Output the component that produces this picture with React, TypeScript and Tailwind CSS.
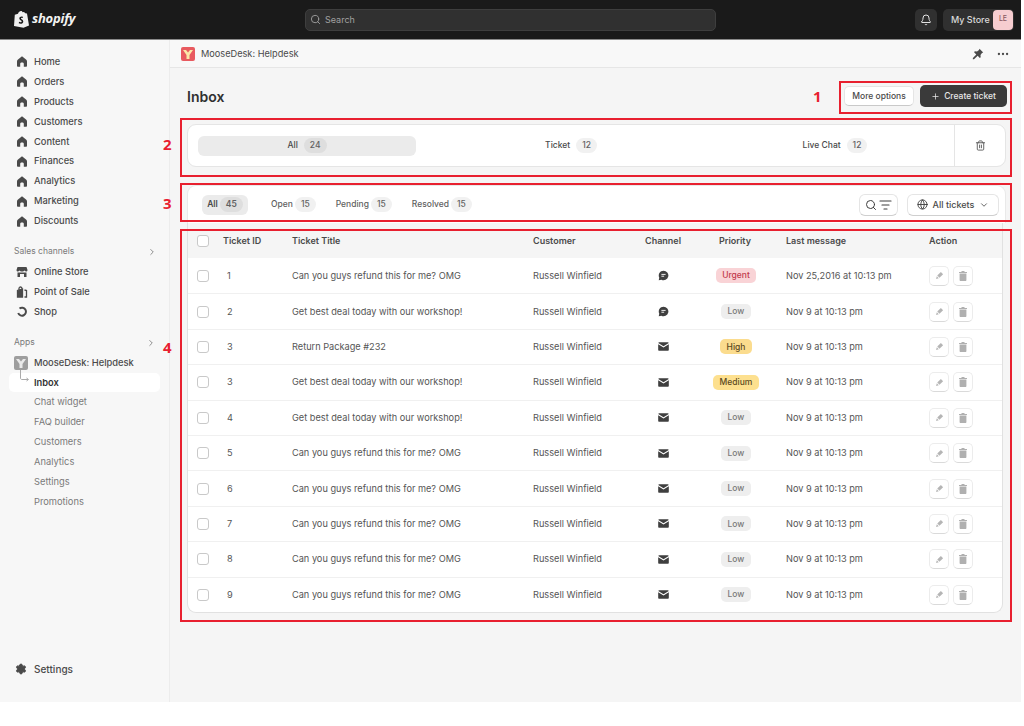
import React from "react";
import { Search, Bell, ChevronRight, ChevronDown, Plus, Trash2, Globe, MoreHorizontal, Settings as Gear } from "lucide-react";

const Home = () => (
  <svg width="10" height="11" viewBox="0 0 10 11" className="shrink-0 text-[#4a4a4a]" fill="currentColor">
    <path d="M5 .3 1 3.500C.4 4 0 4.600 0 5.400V10c0 .5.300.8.800.8h2.400V7.800c0-.8.800-1.300 1.800-1.300s1.800.5 1.800 1.300v3h2.400c.5 0 .8-.3.8-.8V5.400c0-.8-.4-1.400-1-1.900L5 .3z" />
  </svg>
);
const StoreIc = () => (
  <svg width="12" height="12" viewBox="0 0 12 12" className="shrink-0 text-[#4a4a4a]" fill="currentColor">
    <path d="M1.500 1h9l1 3c0 1-.7 1.500-1.500 1.500S8.600 5 8.500 4.300C8.300 5 7.700 5.500 7 5.500H5c-.7 0-1.300-.5-1.500-1.200C3.400 5 2.800 5.500 2 5.500S.5 5 .5 4l1-3z" />
    <path d="M1.500 6.500h9V11H8V8H4v3H1.500z" />
  </svg>
);
const PosIc = () => (
  <svg width="12" height="12" viewBox="0 0 12 12" className="shrink-0 text-[#4a4a4a]" fill="none" stroke="currentColor" strokeWidth="1.300">
    <path d="M1.500 11V4.500L6.500 3v8z" fill="currentColor" />
    <path d="M3 4V2.500C3 1.500 3.800 1 4.500 1S6 1.500 6 2.500V4M8.500 4l2 .5V11h-2" />
  </svg>
);
const ShopIc = () => (
  <svg width="12" height="12" viewBox="0 0 12 12" className="shrink-0 text-[#4a4a4a]" fill="none" stroke="currentColor" strokeWidth="2">
    <path d="M3.500 2.500A4 4 0 1 1 2.200 7" />
  </svg>
);
const Moose = ({ bg, fg }: { bg: string; fg: string }) => (
  <svg width="14" height="14" viewBox="0 0 14 14" className="shrink-0">
    <rect width="14" height="14" rx="2" fill={bg} />
    <path d="M2 3h3l2 2.500L9 3h3L8.500 8v4h-3V8z" fill={fg} />
  </svg>
);
const Chat = () => (
  <svg width="11" height="11" viewBox="0 0 12 12">
    <path d="M6 .8a5.200 5.200 0 0 0-4.600 7.600L.8 11.200l2.900-.6A5.200 5.200 0 1 0 6 .8z" fill="#3f3f3f" />
    <path d="M3.700 4.800h4.600M3.700 6.800h3" stroke="#fff" strokeWidth="1" />
  </svg>
);
const Mail = () => (
  <svg width="11" height="9" viewBox="0 0 12 10">
    <path d="M1.200.4h9.600c.5 0 .9.300 1 .7L6 4.700.2 1.100c.1-.4.500-.7 1-.7z" fill="#3f3f3f" />
    <path d="M.1 2.500 6 6.100l5.900-3.600v6c0 .6-.5 1.100-1.100 1.100H1.200C.6 9.600.1 9.100.1 8.500z" fill="#3f3f3f" />
  </svg>
);
const Pencil = () => (
  <svg width="9" height="9" viewBox="0 0 10 10" fill="#b5b5b5">
    <path d="M6.500 1 9 3.500 5 7.500 2.500 5z" />
    <path d="M2 5.800 4.200 8 1.200 8.800z" />
  </svg>
);
const Bin = () => (
  <svg width="8" height="10" viewBox="0 0 8 10" fill="#b0b0b0">
    <path d="M2.500 0h3v1H8v1H0V1h2.500zM.6 2.600h6.800V9c0 .6-.4 1-1 1H1.600c-.6 0-1-.4-1-1z" />
  </svg>
);
const Filter = () => (
  <svg width="13" height="10" viewBox="0 0 13 10" stroke="#3f3f3f" strokeWidth="1.200" strokeLinecap="round">
    <path d="M1 1h11M3 5h7M5 9h3" />
  </svg>
);

const Count = ({ n, dark }: { n: number; dark?: boolean }) => (
  <span className={`rounded-full px-[6px] h-[15px] flex items-center text-[8.500px] text-[#616161] ${dark ? "bg-[#dedede]" : "bg-[#f1f1f1]"}`}>{n}</span>
);

const nav = ["Home", "Orders", "Products", "Customers", "Content", "Finances", "Analytics", "Marketing", "Discounts"];
const sub = ["Chat widget", "FAQ builder", "Customers", "Analytics", "Settings", "Promotions"];
const long = "Can you guys refund this for me? OMG";
const best = "Get best deal today with our workshop!";
type P = "Urgent" | "Low" | "High" | "Medium";
const rows: { id: number; t: string; c: "chat" | "mail"; p: P; d: string }[] = [
  { id: 1, t: long, c: "chat", p: "Urgent", d: "Nov 25,2016 at 10:13 pm" },
  { id: 2, t: best, c: "chat", p: "Low", d: "Nov 9 at 10:13 pm" },
  { id: 3, t: "Return Package #232", c: "mail", p: "High", d: "Nov 9 at 10:13 pm" },
  { id: 3, t: best, c: "mail", p: "Medium", d: "Nov 9 at 10:13 pm" },
  { id: 4, t: best, c: "mail", p: "Low", d: "Nov 9 at 10:13 pm" },
  { id: 5, t: long, c: "mail", p: "Low", d: "Nov 9 at 10:13 pm" },
  { id: 6, t: long, c: "mail", p: "Low", d: "Nov 9 at 10:13 pm" },
  { id: 7, t: long, c: "mail", p: "Low", d: "Nov 9 at 10:13 pm" },
  { id: 8, t: long, c: "mail", p: "Low", d: "Nov 9 at 10:13 pm" },
  { id: 9, t: long, c: "mail", p: "Low", d: "Nov 9 at 10:13 pm" },
];
const badge: Record<P, string> = {
  Urgent: "bg-[#f9d3d6] text-[#c23a4b]",
  Low: "bg-[#eeeeee] text-[#7a7a7a]",
  High: "bg-[#fbdc8e] text-[#5c4a1e]",
  Medium: "bg-[#fde08f] text-[#5c4a1e]",
};
const cols = "grid grid-cols-[35px_69px_241px_112px_74px_67px_143px_1fr] items-center";
const Check = () => <span className="block w-3 h-3 rounded-[3px] border border-[#c9c9c9] bg-white ml-[9px]" />;

const RedBox = ({ cls }: { cls: string }) => <div className={`absolute border-2 border-[#e8202f] pointer-events-none ${cls}`} />;
const RedNum = ({ n, cls }: { n: number; cls: string }) => (
  <span className={`absolute text-[15px] font-bold leading-none text-[#e8202f] [font-family:'Open_Sans',sans-serif] ${cls}`}>{n}</span>
);

export default function App() {
  return (
    <div className="relative w-[1024px] h-[726px] bg-white overflow-hidden [font-family:Inter,sans-serif] text-[#4a4a4a]">
      <div className="w-[1021px] h-[702px] flex flex-col">
        <header className="h-[40px] shrink-0 bg-[#1a1a1a] border-b border-[#8a8a8a] flex items-center pl-[14px] pr-[7px]">
          <div className="w-[291px] flex items-center gap-[3px] pb-[1px]">
            <svg width="15" height="17" viewBox="0 0 15 17">
              <path d="M.8 3.800 4 2.800C4.500 1 5.800 0 7 0c.8 0 1.300.5 1.600 1.200l1.400-.3 1.300 1.300 1.700.2L15 14.500 9.500 16.800.0 15z" fill="#f0f0f0" />
              <path d="M8.900 5.900C7.500 5.200 5.300 5.800 5.300 7.600c0 1.800 2.400 1.800 2.400 2.900 0 1-1.500 1-2.600.3l-.4 1.500c1.800 1 4.600.5 4.600-1.900 0-2.100-2.400-2.100-2.400-3 0-.6 1-.8 2.100-.4z" fill="#1a1a1a" />
            </svg>
            <span className="text-[13px] font-bold italic text-[#f2f2f2] tracking-[-0.2px] [font-family:'Open_Sans',sans-serif]">shopify</span>
          </div>
          <div className="w-[411px] h-[22px] rounded-[5px] bg-[#303030] border border-[#3e3e3e] flex items-center gap-[4px] px-[4px] text-[9px] text-[#a0a0a0]">
            <Search size={11} className="text-[#a0a0a0]" />
            Search
          </div>
          <div className="ml-auto flex items-center gap-[6px]">
            <div className="w-[22px] h-[22px] rounded-[5px] bg-[#303030] flex items-center justify-center">
              <Bell size={12} className="text-[#e3e3e3]" />
            </div>
            <div className="h-[22px] w-[71px] rounded-[5px] bg-[#303030] flex items-center justify-between pl-2 pr-[1px] text-[9px] font-medium text-[#d9d9d9]">
              My Store
              <span className="w-5 h-5 rounded-[4px] bg-[#f6cdd0] text-[#8a5a60] text-[7px] flex items-center justify-center">LE</span>
            </div>
          </div>
        </header>

        <div className="flex-1 flex min-h-0">
          <aside className="w-[170px] shrink-0 bg-[#f7f7f7] border-r border-[#ececec] flex flex-col pt-[12px] pb-[23px] text-[9.300px] font-medium">
            <nav className="flex flex-col">
              {nav.map((n) => (
                <div key={n} className="h-[19.900px] flex items-center gap-[7px] pl-[17px]">
                  <Home />
                  <span>{n}</span>
                </div>
              ))}
            </nav>
            <div className="mt-[10px] h-[21px] flex items-center justify-between pl-[14px] pr-[12px] text-[8.500px] font-normal text-[#7a7a7a]">
              Sales channels <ChevronRight size={10} />
            </div>
            {[["Online Store", <StoreIc />], ["Point of Sale", <PosIc />], ["Shop", <ShopIc />]].map(([t, ic]) => (
              <div key={t as string} className="h-[19.900px] flex items-center gap-[6px] pl-[16px]">
                {ic}
                <span>{t}</span>
              </div>
            ))}
            <div className="mt-[11px] h-[20px] flex items-center justify-between pl-[14px] pr-[13px] text-[8.500px] font-normal text-[#7a7a7a]">
              Apps <ChevronRight size={10} />
            </div>
            <div className="h-[19.900px] flex items-center gap-[6px] pl-[14px] text-[#4a4a4a]">
              <Moose bg="#9e9e9e" fg="#e9e9e9" />
              <span>MooseDesk: Helpdesk</span>
            </div>
            <div className="relative mx-[9px] h-[19.900px] rounded-[5px] bg-white flex items-center pl-[25px] font-semibold text-[#333]">
              <svg width="10" height="14" viewBox="0 0 10 14" className="absolute left-[11px] top-[-3px]" fill="none" stroke="#aaa">
                <path d="M.5 0v8c0 1 .6 1.500 1.500 1.500h6M6.500 8l2 1.500-2 1.500" />
              </svg>
              Inbox
            </div>
            {sub.map((s) => (
              <div key={s} className="h-[19.900px] flex items-center pl-[34px] font-normal text-[#7a7a7a]">{s}</div>
            ))}
            <div className="mt-auto h-[20px] flex items-center gap-[7px] pl-[15px] text-[10px]">
              <Gear size={12} fill="#4a4a4a" className="text-[#4a4a4a]" />
              Settings
            </div>
          </aside>

          <main className="flex-1 min-w-0 bg-[#f5f5f5] flex flex-col">
            <div className="h-[28px] shrink-0 bg-[#f8f8f8] border-b border-[#e6e6e6] flex items-center pl-[11px] pr-[11px] gap-[6px] text-[9.200px]">
              <Moose bg="#e85a5f" fg="#fbe7a8" />
              <span>MooseDesk: Helpdesk</span>
              <svg width="12" height="12" viewBox="0 0 12 12" fill="#4a4a4a" className="ml-auto mr-[6px]">
                <path d="M7.500.8 11.200 4.500 10 5 8.500 7l.2 2.200-.9.7L5.700 7.800 2 11.200l-1.200.1.100-1.200L4.300 6.400 2.100 4.200l.7-.9L5 3.500 7 2z" />
              </svg>
              <MoreHorizontal size={14} className="text-[#4a4a4a]" />
            </div>

            <div className="flex-1 pl-[17px] pr-[15px] flex flex-col">
              <div className="h-[56px] shrink-0 flex items-center justify-between">
                <h1 className="text-[14px] font-semibold text-[#303030]">Inbox</h1>
                <div className="flex items-center gap-[6px] mr-[-1px]">
                  <button className="h-[20px] w-[70px] rounded-[5px] bg-white border border-[#e5e5e5] border-b-[#c9c9c9] text-[8.500px] font-medium">More options</button>
                  <button className="h-[22px] w-[87px] rounded-[5px] bg-[#3a3a3a] text-[#e8e8e8] text-[8.500px] font-medium flex items-center justify-center gap-[4px]">
                    <Plus size={9} /> Create ticket
                  </button>
                </div>
              </div>

              <div className="h-[43px] shrink-0 rounded-[9px] bg-white border border-[#e5e5e5] flex items-center text-[8.500px] font-medium">
                <div className="flex-1 flex items-center pl-[10px]">
                  <div className="w-[218px] h-[20px] rounded-[6px] bg-[#ebebeb] flex items-center justify-center gap-[6px]">
                    All <Count n={24} dark />
                  </div>
                  <div className="w-[310px] flex items-center justify-center gap-[6px]">Ticket <Count n={12} /></div>
                  <div className="w-[218px] flex items-center justify-center gap-[6px]">Live Chat <Count n={12} /></div>
                </div>
                <div className="w-[51px] h-full border-l border-[#e5e5e5] flex items-center justify-center">
                  <Trash2 size={11} className="text-[#5a5a5a]" />
                </div>
              </div>

              <div className="mt-[18px] h-[38px] shrink-0 rounded-t-[9px] bg-white border border-b-0 border-[#e9e9e9] flex items-center justify-between pl-[14px] pr-[6px] text-[8.500px] font-medium">
                <div className="flex items-center">
                  <div className="h-[20px] w-[46px] rounded-[6px] bg-[#ebebeb] flex items-center justify-center gap-[2px] font-semibold">All <Count n={45} dark /></div>
                  <div className="ml-[23px] flex items-center gap-[2px] text-[#5f5f5f]">Open <Count n={15} /></div>
                  <div className="ml-[20px] flex items-center gap-[2px] text-[#5f5f5f]">Pending <Count n={15} /></div>
                  <div className="ml-[20px] flex items-center gap-[2px] text-[#5f5f5f]">Resolved <Count n={15} /></div>
                </div>
                <div className="flex items-center gap-[9px]">
                  <div className="h-[22px] w-[39px] rounded-[6px] border border-[#e5e5e5] border-b-[#cfcfcf] bg-white flex items-center justify-center gap-[2px]">
                    <Search size={12} className="text-[#3f3f3f]" />
                    <Filter />
                  </div>
                  <div className="h-[22px] w-[92px] rounded-[6px] border border-[#e5e5e5] border-b-[#cfcfcf] bg-white flex items-center justify-center gap-[5px] text-[9px]">
                    <Globe size={11} className="text-[#3f3f3f]" />
                    All tickets
                    <ChevronDown size={10} />
                  </div>
                </div>
              </div>

              <div className="rounded-b-[9px] bg-white border-x border-b border-[#e1e1e1] overflow-hidden mr-[3px] text-[9.200px] text-[#555]">
                <div className={`${cols} h-[35px] bg-[#f5f5f5] font-semibold text-[#4a4a4a] text-[9px]`}>
                  <Check />
                  <span>Ticket ID</span>
                  <span>Ticket Title</span>
                  <span>Customer</span>
                  <span>Channel</span>
                  <span>Priority</span>
                  <span>Last message</span>
                  <span>Action</span>
                </div>
                {rows.map((r, i) => (
                  <div key={i} className={`${cols} h-[35.400px] ${i === 0 ? "" : "border-t border-[#f0f0f0]"}`}>
                    <Check />
                    <span className="pl-[4px]">{r.id}</span>
                    <span>{r.t}</span>
                    <span>Russell Winfield</span>
                    <span className="flex justify-center w-[36px]">{r.c === "chat" ? <Chat /> : <Mail />}</span>
                    <span className="flex justify-center w-[34px]">
                      <span className={`h-[15px] px-[6.500px] rounded-[5px] flex items-center text-[8.500px] font-medium ${badge[r.p]}`}>{r.p}</span>
                    </span>
                    <span>{r.d}</span>
                    <span className="flex gap-[4px]">
                      <span className="w-[20px] h-[20px] rounded-[5px] border border-[#ececec] border-b-[#dadada] flex items-center justify-center"><Pencil /></span>
                      <span className="w-[20px] h-[20px] rounded-[5px] border border-[#ececec] border-b-[#dadada] flex items-center justify-center"><Bin /></span>
                    </span>
                  </div>
                ))}
              </div>
            </div>
          </main>
        </div>
      </div>

      <RedBox cls="left-[839px] top-[81px] w-[173px] h-[33px]" />
      <RedBox cls="left-[180px] top-[118px] w-[832px] h-[59px]" />
      <RedBox cls="left-[180px] top-[183px] w-[832px] h-[39px]" />
      <RedBox cls="left-[180px] top-[229px] w-[832px] h-[393px]" />
      <RedNum n={1} cls="left-[813px] top-[89px]" />
      <RedNum n={2} cls="left-[163px] top-[137px]" />
      <RedNum n={3} cls="left-[163px] top-[196px]" />
      <RedNum n={4} cls="left-[163px] top-[340px]" />
    </div>
  );
}
